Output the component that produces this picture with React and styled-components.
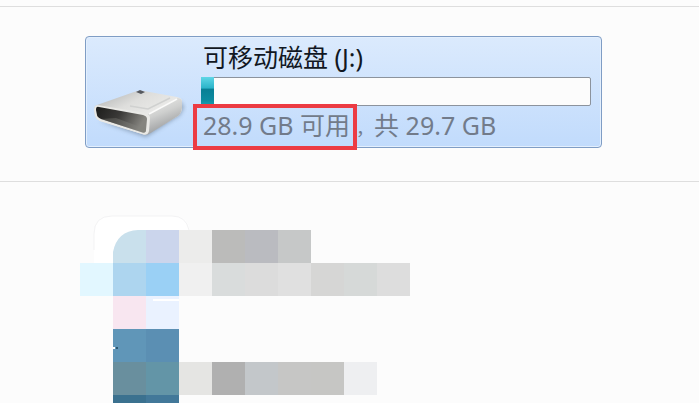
import React from "react";
import styled, { createGlobalStyle } from "styled-components";

const GlobalStyle = createGlobalStyle`
  html,
  body {
    margin: 0;
    background: #fcfcfc;
  }

  body {
    font-family: "Noto Sans", "Noto Sans CJK SC", sans-serif;
    font-size: 25px;
  }

  * {
    box-sizing: border-box;
  }
`;

const Main = styled.main`
  padding-top: 6px;
`;

const Group = styled.section`
  border-top: 1px solid #dedede;
  padding: ${({ $top }) => $top}px 80px 0;
`;

const DriveCard = styled.article`
  display: flex;
  align-items: flex-end;
  gap: 14px;
  max-width: 517px;
  margin: 0 0 33px 5px;
  padding: 0 10px 0 8px;
  border: 1px solid #7f9dc5;
  border-radius: 4px;
  box-shadow: inset 0 0 0 1px #e3effd;
  background: linear-gradient(#dbeafd, #c1dbfc);
`;

const DriveIcon = styled.svg`
  flex: none;
  width: 93px;
  height: 64px;
`;

const Details = styled.div`
  flex: 1;
  min-width: 0;
  white-space: nowrap;
`;

const Title = styled.h2`
  margin: 0;
  padding-left: 2px;
  font-size: 25px;
  font-weight: 400;
  line-height: 40px;
  color: #111722;
`;

const Bar = styled.div`
  height: 29px;
  border: 1px solid #8c939d;
  border-radius: 2px;
  background: #fcfcfc;
`;

const BarFill = styled.div`
  height: 29px;
  margin: -1px;
  background: linear-gradient(#5fd6e6, #2bb4c9 38%, #087f95 42%, #0c8ba0 80%, #16a2b4);
`;

const Space = styled.p`
  margin: 0;
  padding: 0 0 2px 2px;
  line-height: 39px;
  color: #727b8a;
`;

const Free = styled.span`
  position: relative;

  &::after {
    content: "";
    position: absolute;
    inset: -4px -7px -8px -10px;
    border: 4px solid #ec3b43;
  }
`;

const Comma = styled.span`
  padding-left: 6px;
  font-size: 18px;
  line-height: 1;
`;

const Mosaic = styled.svg`
  display: block;
  width: 331px;
  height: 189px;
`;

const CELL = 33;

// column, row, colour
const cells = [
  [1, 0, "#c9e0ec"],
  [2, 0, "#cbd5ec"],
  [3, 0, "#ececeb"],
  [4, 0, "#bbbbba"],
  [5, 0, "#babbc0"],
  [6, 0, "#c6c8c8"],
  [0, 1, "#e2f7ff"],
  [1, 1, "#add5ef"],
  [2, 1, "#9ad0f5"],
  [3, 1, "#f0f0f0"],
  [4, 1, "#d9dcdc"],
  [5, 1, "#dcdcdc"],
  [6, 1, "#e0e0e0"],
  [7, 1, "#d6d6d5"],
  [8, 1, "#d6d9d8"],
  [9, 1, "#dddddd"],
  [1, 2, "#f8e6f0"],
  [2, 2, "#eaf2ff"],
  [1, 3, "#6096b8"],
  [2, 3, "#5b8fb3"],
  [1, 4, "#698f9e"],
  [2, 4, "#6395a7"],
  [3, 4, "#e5e5e3"],
  [4, 4, "#b0b0b0"],
  [5, 4, "#c3c7ca"],
  [6, 4, "#c6c6c5"],
  [7, 4, "#c6c6c4"],
  [8, 4, "#eeeff1"],
  [1, 5, "#3b718f"],
  [2, 5, "#427899"],
];

function Drive() {
  return (
    <DriveIcon viewBox="0 0 93 64" aria-hidden="true">
      <defs>
        <linearGradient id="top" x1="0" y1="0" x2="1" y2="1">
          <stop offset="0" stopColor="#a9abab" />
          <stop offset="0.35" stopColor="#dededc" />
          <stop offset="0.7" stopColor="#efefed" />
          <stop offset="1" stopColor="#c2c3c2" />
        </linearGradient>
        <linearGradient id="side" x1="0" y1="0" x2="0.4" y2="1">
          <stop offset="0" stopColor="#f2f2f0" />
          <stop offset="0.5" stopColor="#cfd0cf" />
          <stop offset="1" stopColor="#96989a" />
        </linearGradient>
        <linearGradient id="slot" x1="0" y1="0" x2="1" y2="0.3">
          <stop offset="0" stopColor="#1c1c1b" />
          <stop offset="0.5" stopColor="#3a3937" />
          <stop offset="1" stopColor="#85847f" />
        </linearGradient>
        <filter id="soft" x="-20%" y="-20%" width="140%" height="150%">
          <feGaussianBlur stdDeviation="2" />
        </filter>
      </defs>
      <path
        d="M5 38L52 54L86 32L90 24L86 18L58 45Z"
        fill="#66798f"
        opacity="0.6"
        filter="url(#soft)"
      />
      <path
        d="M3 22Q0 23 0 27L1 33Q2 36 6 38L48 51Q52 53 55 50L84 33Q88 30 88 24V18Q88 15 83 14L50 8Q45 7 40 9Z"
        fill="url(#top)"
      />
      <path
        d="M54 31L83 15Q88 15 88 19V25Q87 31 84 33L55 51Q53 52 51 51Z"
        fill="url(#side)"
      />
      <path
        d="M3 22L51 30Q56 31 56 35L55 48Q54 53 48 51L6 38Q2 36 1 33L0 27Q0 23 3 22Z"
        fill="#e9e9e6"
      />
      <path
        d="M5 24L49 32Q53 33 53 36L52 47Q52 51 47 49L7 36Q3 34 3 32L2 27Q2 23 5 24Z"
        fill="url(#slot)"
      />
      <path d="M7 36L22 35L52 46Q52 51 47 49Z" fill="#85847f" opacity="0.35" />
      <path d="M42 9L46 7L51 9L47 11Z" fill="#55585e" />
      <path
        d="M36 23L54 26L76 15"
        fill="none"
        stroke="#d0d1d0"
        strokeWidth="1.5"
      />
      <path d="M55 31L83 16" stroke="#fbfbfa" strokeWidth="1.5" />
    </DriveIcon>
  );
}

export default function App() {
  const total = 29.7;
  const free = 28.9;
  const used = ((total - free) / total) * 100;

  return (
    <>
      <GlobalStyle />
      <Main>
        <Group $top={29}>
          <DriveCard>
            <Drive />
            <Details>
              <Title>可移动磁盘 (J:)</Title>
              <Bar
                role="meter"
                aria-label="已用空间"
                aria-valuemin={0}
                aria-valuemax={100}
                aria-valuenow={Math.round(used)}
              >
                <BarFill style={{ width: `calc(${used}% + 3px)` }} />
              </Bar>
              <Space>
                <Free>{free} GB 可用</Free>
                <Comma>，</Comma>共 {total} GB
              </Space>
            </Details>
          </DriveCard>
        </Group>
        <Group $top={32}>
          <Mosaic viewBox="0 0 331 189" aria-hidden="true">
            <path
              d="M14 49V20Q14 2 32 2H92Q110 2 110 20V49Z"
              fill="#ffffff"
            />
            <path
              d="M14 36V20Q14 2 32 2H92Q106 2 109 16"
              fill="none"
              stroke="#f3f3f4"
            />
            {cells.map(([col, row, fill]) => (
              <rect
                key={`${col}-${row}`}
                x={col * CELL}
                y={row * CELL + 16}
                width={CELL}
                height={CELL}
                fill={fill}
                shapeRendering="crispEdges"
              />
            ))}
            <path d="M33 16H58Q37 17 33 38Z" fill="#ffffff" />
            <path d="M73 86H99" stroke="#ffffff" strokeWidth="2" />
            <path d="M33 134H35" stroke="#ffffff" strokeWidth="2" />
            <path d="M36 134H38" stroke="#2b566f" strokeWidth="2" />
          </Mosaic>
        </Group>
      </Main>
    </>
  );
}
